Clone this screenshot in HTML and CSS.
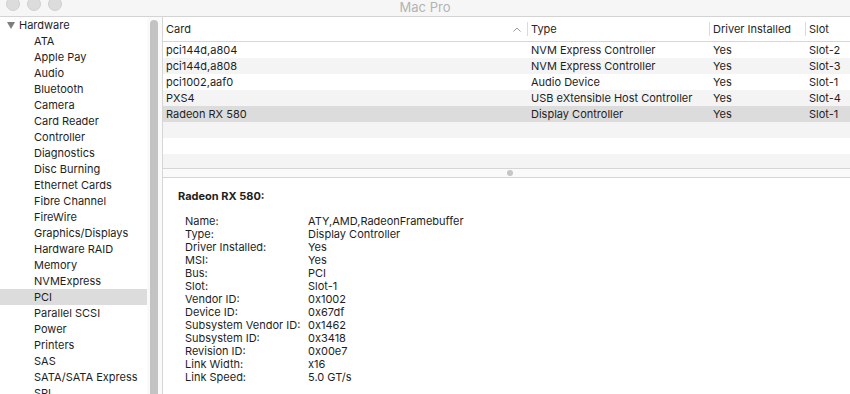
FILE: index.html
```html
<!DOCTYPE html>
<html>
<head>
<meta charset="utf-8">
<link rel="stylesheet" href="styles.css">
</head>
<body>
<div class="window">
  <div class="titlebar">
    <div class="lights"><span class="light"></span><span class="light"></span><span class="light"></span></div>
    <div class="title">Mac Pro</div>
  </div>
  <div class="content">
    <div class="sidebar">
      <div class="srow group"><svg class="tri" width="8" height="7" viewBox="0 0 8 7"><path d="M0 0 H8 L4 7 Z" fill="#7d7d7d"/></svg>Hardware</div>
      <div class="srow">ATA</div>
      <div class="srow">Apple Pay</div>
      <div class="srow">Audio</div>
      <div class="srow">Bluetooth</div>
      <div class="srow">Camera</div>
      <div class="srow">Card Reader</div>
      <div class="srow">Controller</div>
      <div class="srow">Diagnostics</div>
      <div class="srow">Disc Burning</div>
      <div class="srow">Ethernet Cards</div>
      <div class="srow">Fibre Channel</div>
      <div class="srow">FireWire</div>
      <div class="srow">Graphics/Displays</div>
      <div class="srow">Hardware RAID</div>
      <div class="srow">Memory</div>
      <div class="srow">NVMExpress</div>
      <div class="srow selected">PCI</div>
      <div class="srow">Parallel SCSI</div>
      <div class="srow">Power</div>
      <div class="srow">Printers</div>
      <div class="srow">SAS</div>
      <div class="srow">SATA/SATA Express</div>
      <div class="srow">SPI</div>
    </div>
    <div class="scrollbar"><div class="thumb"></div></div>
    <div class="main">
      <div class="table">
        <div class="thead">
          <div class="th first">Card<span class="sort"><svg width="8" height="5" viewBox="0 0 8 5"><path d="M0.5 4.5 L4 1 L7.5 4.5" fill="none" stroke="#9a9a9a" stroke-width="1"/></svg></span></div>
          <div class="th">Type</div>
          <div class="th">Driver Installed</div>
          <div class="th">Slot</div>
        </div>
        <div class="tr"><div class="td first">pci144d,a804</div><div class="td">NVM Express Controller</div><div class="td">Yes</div><div class="td">Slot-2</div></div>
        <div class="tr alt"><div class="td first">pci144d,a808</div><div class="td">NVM Express Controller</div><div class="td">Yes</div><div class="td">Slot-3</div></div>
        <div class="tr"><div class="td first">pci1002,aaf0</div><div class="td">Audio Device</div><div class="td">Yes</div><div class="td">Slot-1</div></div>
        <div class="tr alt"><div class="td first">PXS4</div><div class="td">USB eXtensible Host Controller</div><div class="td">Yes</div><div class="td">Slot-4</div></div>
        <div class="tr sel"><div class="td first">Radeon RX 580</div><div class="td">Display Controller</div><div class="td">Yes</div><div class="td">Slot-1</div></div>
        <div class="tr alt"></div>
        <div class="tr"></div>
        <div class="tr alt"></div>
      </div>
      <div class="splitter"><span class="dot"></span></div>
      <div class="detail">
        <div class="dtitle">Radeon RX 580:</div>
        <div class="props">
          <div class="k">Name:</div><div class="v">ATY,AMD,RadeonFramebuffer</div>
          <div class="k">Type:</div><div class="v">Display Controller</div>
          <div class="k">Driver Installed:</div><div class="v">Yes</div>
          <div class="k">MSI:</div><div class="v">Yes</div>
          <div class="k">Bus:</div><div class="v">PCI</div>
          <div class="k">Slot:</div><div class="v">Slot-1</div>
          <div class="k">Vendor ID:</div><div class="v">0x1002</div>
          <div class="k">Device ID:</div><div class="v">0x67df</div>
          <div class="k">Subsystem Vendor ID:</div><div class="v">0x1462</div>
          <div class="k">Subsystem ID:</div><div class="v">0x3418</div>
          <div class="k">Revision ID:</div><div class="v">0x00e7</div>
          <div class="k">Link Width:</div><div class="v">x16</div>
          <div class="k">Link Speed:</div><div class="v">5.0 GT/s</div>
        </div>
      </div>
    </div>
  </div>
</div>
</body>
</html>
```

FILE: styles.css
```css
html, body {
  margin: 0;
  padding: 0;
  background: #ffffff;
}
body {
  width: 850px;
  height: 394px;
  overflow: hidden;
  font-family: Inter, "Liberation Sans", sans-serif;
  font-size: 11px;
  color: #1e1e1e;
}
.window {
  display: flex;
  flex-direction: column;
  height: 394px;
  overflow: hidden;
}
.titlebar {
  height: 16px;
  flex: none;
  background: #f6f6f6;
  border-bottom: 1px solid #d4d4d4;
  display: flex;
  align-items: flex-start;
  justify-content: center;
  position: relative;
  overflow: hidden;
}
.lights {
  position: absolute;
  left: 6px;
  top: -3px;
  display: flex;
  gap: 7px;
}
.light {
  width: 12px;
  height: 12px;
  border-radius: 50%;
  background: #dcdcdc;
  border: 0.5px solid #d0d0d0;
}
.title {
  font-size: 13px;
  line-height: 14px;
  color: #b3b3b3;
}
.content {
  flex: 1;
  display: flex;
  min-height: 0;
  overflow: hidden;
}
.sidebar {
  width: 147px;
  flex: none;
  background: #ffffff;
  overflow: hidden;
}
.srow {
  height: 16px;
  line-height: 16px;
  padding-left: 34px;
  white-space: nowrap;
  color: #1e1e1e;
}
.srow.group {
  padding-left: 7px;
  display: flex;
  align-items: center;
  gap: 4px;
}
.tri {
  flex: none;
}
.srow.selected {
  background: #dcdcdc;
}
.scrollbar {
  width: 16px;
  flex: none;
  background: #fafafa;
  border-right: 1px solid #d6d6d6;
  padding: 3px 0 0 3px;
  box-sizing: border-box;
  overflow: hidden;
  display: flex;
  flex-direction: column;
}
.thumb {
  width: 8px;
  flex: 1;
  border-radius: 4px 4px 0 0;
  background: #c3c3c3;
}
.main {
  flex: 1;
  display: flex;
  flex-direction: column;
  min-width: 0;
  overflow: hidden;
}
.table {
  height: 151px;
  flex: none;
  overflow: hidden;
}
.thead, .tr {
  display: grid;
  grid-template-columns: 364px 182px 96px 1fr;
}
.thead {
  height: 24px;
  border-bottom: 1px solid #d6d6d6;
  align-items: center;
  background: #ffffff;
}
.th {
  padding-left: 3px;
  height: 14px;
  line-height: 14px;
  border-left: 1px solid #dadada;
  color: #262626;
  white-space: nowrap;
}
.th.first {
  border-left: none;
  display: flex;
  justify-content: space-between;
}
.sort {
  padding-right: 6px;
  display: flex;
  align-items: center;
}
.tr {
  height: 16px;
  line-height: 16px;
}
.tr.alt {
  background: #f4f4f4;
}
.tr.sel {
  background: #dcdcdc;
}
.td {
  padding-left: 4px;
  white-space: nowrap;
  overflow: hidden;
}
.td.first {
  padding-left: 3px;
}
.splitter {
  height: 8px;
  flex: none;
  border-top: 1px solid #d6d6d6;
  border-bottom: 1px solid #d6d6d6;
  background: #fafafa;
  display: flex;
  align-items: center;
  justify-content: center;
  padding-left: 6px;
}
.dot {
  width: 6px;
  height: 6px;
  border-radius: 50%;
  background: #c6c6c6;
}
.detail {
  flex: 1;
  padding: 11px 0 0 15px;
  overflow: hidden;
}
.dtitle {
  font-weight: 700;
  line-height: 14px;
  margin-bottom: 12px;
}
.props {
  display: grid;
  grid-template-columns: 123px 1fr;
  padding-left: 7px;
  line-height: 13px;
}
```
